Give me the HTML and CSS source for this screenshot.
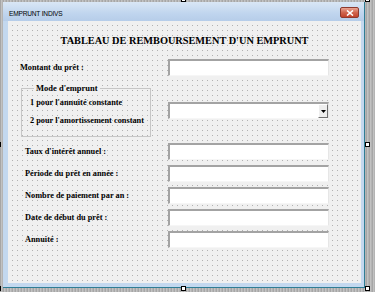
FILE: index.html
```html
<!DOCTYPE html>
<html lang="fr">
<head>
<meta charset="utf-8">
<title>EMPRUNT INDIVS</title>
<link rel="stylesheet" href="styles.css">
</head>
<body>
<div class="designer">
  <div class="window">
    <div class="titlebar">
      <span class="caption">EMPRUNT INDIVS</span>
      <span class="close"><svg width="8" height="6" viewBox="0 0 8 6"><path d="M1 0.5 L7 5.5 M7 0.5 L1 5.5" stroke="#fff" stroke-width="1.6"/></svg></span>
    </div>
    <div class="client">
      <h1 class="heading">TABLEAU DE REMBOURSEMENT D'UN EMPRUNT</h1>
      <div class="field field-first">
        <span class="label">Montant du prêt :</span>
        <span class="textbox"></span>
      </div>
      <div class="mode-row">
        <fieldset class="frame">
          <legend class="frame-title">Mode d'emprunt</legend>
          <span class="frame-label">1 pour l'annuité constante</span>
          <span class="frame-label frame-label-2">2 pour l'amortissement constant</span>
        </fieldset>
        <span class="combo"><span class="combo-btn"><svg width="5" height="3" viewBox="0 0 5 3"><path d="M0 0 H5 L2.5 3 Z" fill="#000"/></svg></span></span>
      </div>
      <div class="field field-gap">
        <span class="label label-indent">Taux d'intérêt annuel :</span>
        <span class="textbox"></span>
      </div>
      <div class="field">
        <span class="label label-indent">Période du prêt en année :</span>
        <span class="textbox"></span>
      </div>
      <div class="field">
        <span class="label label-indent">Nombre de paiement par an :</span>
        <span class="textbox"></span>
      </div>
      <div class="field">
        <span class="label label-indent">Date de début du prêt :</span>
        <span class="textbox"></span>
      </div>
      <div class="field">
        <span class="label label-indent">Annuité :</span>
        <span class="textbox"></span>
      </div>
    </div>
  </div>
  <span class="handle h-tm"></span>
  <span class="handle h-tr"></span>
  <span class="handle h-ml"></span>
  <span class="handle h-mr"></span>
  <span class="handle h-bl"></span>
  <span class="handle h-bm"></span>
  <span class="handle h-br"></span>
</div>
</body>
</html>
```
FILE: styles.css
```css
* { box-sizing: border-box; }
html, body { margin: 0; padding: 0; background: #ffffff; }
body { width: 375px; height: 300px; overflow: hidden; }

.designer {
  position: relative;
  height: 292px;
  padding: 2px 0 0 3px;
  background: repeating-linear-gradient(90deg, #a6a6a6 0 1px, #c2c2c2 1px 2px, #b4b4b4 2px 3px);
}

.window {
  width: 362px;
  height: 286px;
  display: flex;
  flex-direction: column;
  background: #c3d8ef;
  border-right: 1px solid #2f7d95;
  border-bottom: 1px solid #2f7d95;
  padding: 0 3px 4px 5px;
}

.titlebar {
  height: 19px;
  margin-left: -5px;
  margin-right: -3px;
  padding: 0 5px 0 6px;
  display: flex;
  align-items: center;
  justify-content: space-between;
  background: linear-gradient(180deg, #d9e6f5 0%, #c0d5ee 60%, #b6cde9 100%);
}

.caption {
  font-family: "Liberation Sans", Arial, sans-serif;
  font-size: 6.6px;
  color: #000;
  padding-top: 3px;
  letter-spacing: -0.2px;
}

.close {
  width: 19px;
  height: 11px;
  margin-top: 2px;
  display: flex;
  align-items: center;
  justify-content: center;
  border-radius: 2px;
  border: 1px solid #8d3a2e;
  background: linear-gradient(180deg, #e9a493 0%, #d0664f 50%, #c2432b 100%);
}

.client {
  flex: 1;
  padding: 14px 0 0 12px;
  background-color: #f0f0f0;
  background-image:
    linear-gradient(90deg, #f0f0f0 4px, transparent 4px),
    linear-gradient(180deg, #f0f0f0 4px, #b2b2b2 4px);
  background-size: 5px 5px;
}

.heading {
  margin: 0 0 0 -12px;
  font-family: "Liberation Serif", "Times New Roman", serif;
  font-weight: bold;
  font-size: 10.3px;
  line-height: 12px;
  text-align: center;
  color: #000;
}

.field {
  display: flex;
  align-items: center;
  height: 17px;
  margin-top: 5px;
}
.field-first { margin-top: 12px; }
.field-gap { margin-top: 6px; }

.label {
  width: 148px;
  font-family: "Liberation Serif", "Times New Roman", serif;
  font-weight: bold;
  font-size: 8.3px;
  color: #000;
  white-space: nowrap;
}
.label-indent { padding-left: 5px; }

.textbox {
  width: 161px;
  height: 17px;
  background: #fff;
  border-top: 2px solid #a3a3a3;
  border-left: 2px solid #a3a3a3;
  border-right: 1px solid #e6e6e6;
  border-bottom: 1px solid #f6f6f6;
}

.mode-row {
  display: flex;
  align-items: flex-start;
  margin-top: 7px;
}

.frame {
  width: 130px;
  margin: 0 17px 0 1px;
  padding: 4px 0 9px 8px;
  border: 1px solid #c6c6c6;
  display: flex;
  flex-direction: column;
  font-family: "Liberation Serif", "Times New Roman", serif;
  font-weight: bold;
  font-size: 8.3px;
  color: #000;
}
.frame-title {
  margin-left: 4px;
  padding: 0 2px;
  line-height: 10px;
  background: #f0f0f0;
  font-size: 8.5px;
}
.frame-label {
  line-height: 12px;
  white-space: nowrap;
}
.frame-label-2 { margin-top: 6px; }

.combo {
  width: 161px;
  height: 17px;
  margin-top: 19px;
  display: flex;
  justify-content: flex-end;
  align-items: stretch;
  background: #fff;
  border-top: 2px solid #a3a3a3;
  border-left: 2px solid #a3a3a3;
  border-right: 1px solid #e6e6e6;
  border-bottom: 1px solid #f6f6f6;
}
.combo-btn {
  width: 10px;
  display: flex;
  align-items: center;
  justify-content: center;
  background: #eeeeee;
  border: 1px solid;
  border-color: #fff #707070 #707070 #fff;
}

.handle {
  position: absolute;
  width: 5px;
  height: 5px;
  background: #fff;
  border: 1px solid #000;
}
.h-tm { left: 181px; top: -3px; }
.h-tr { left: 365px; top: -3px; }
.h-ml { left: -4px; top: 142px; }
.h-mr { left: 365px; top: 142px; }
.h-bl { left: -4px; top: 286px; }
.h-bm { left: 181px; top: 286px; }
.h-br { left: 365px; top: 286px; }
```
